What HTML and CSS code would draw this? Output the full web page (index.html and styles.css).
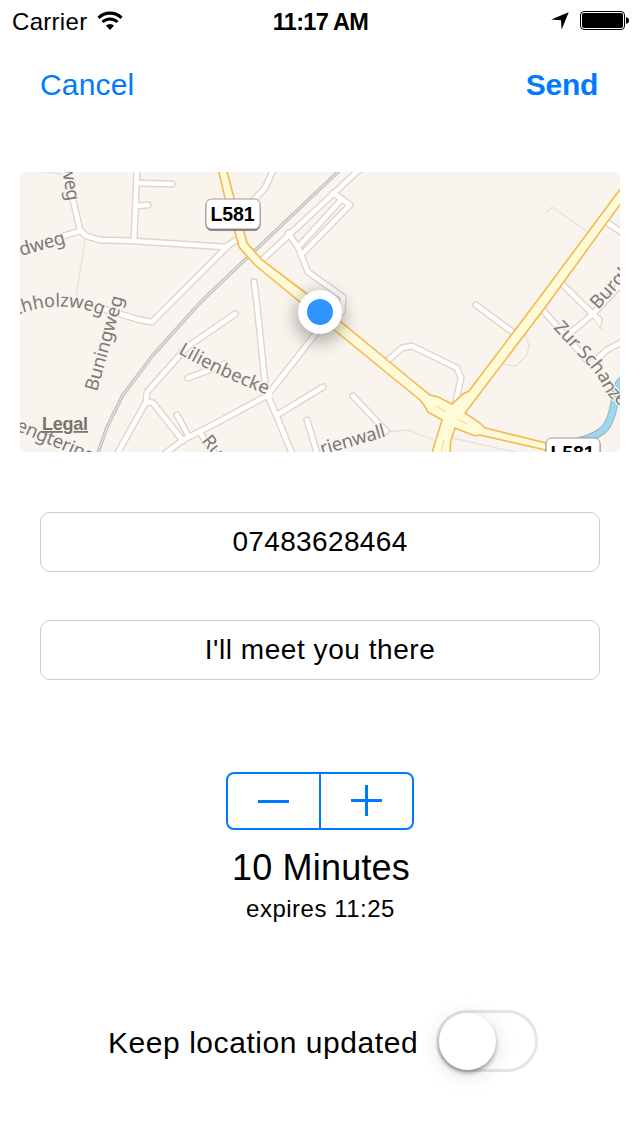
FILE: index.html
```html
<!DOCTYPE html>
<html lang="en">
<head>
<meta charset="utf-8">
<title>Share location</title>
<link rel="stylesheet" href="styles.css">
</head>
<body>
<div class="screen">
  <header class="status-bar">
    <div class="status-left">
      <span class="carrier">Carrier</span>
      <svg class="wifi" width="26" height="20" viewBox="0 0 26 20">
        <path d="M1.5 6.8A16.5 16.5 0 0 1 24.5 6.8" fill="none" stroke="#000" stroke-width="3.1"/>
        <path d="M5.5 11.1A10.6 10.6 0 0 1 20.5 11.1" fill="none" stroke="#000" stroke-width="2.9"/>
        <path d="M8.9 14.6A6 6 0 0 1 17.1 14.6L13 18.9Z"/>
      </svg>
    </div>
    <span class="clock">11:17 AM</span>
    <div class="status-right">
      <svg width="18" height="18" viewBox="0 0 18 18"><path d="M17.7 .2L10.6 17.8L10 8.3L.2 7.6Z"/></svg>
      <svg width="50" height="19" viewBox="0 0 50 19">
        <rect x=".5" y=".5" width="44" height="18" rx="3.5" fill="#fff" stroke="#000"/>
        <rect x="2" y="2" width="41" height="15" rx="2"/>
        <path d="M46 6.2Q49 6.6 49 9.5T46 12.8Z"/>
      </svg>
    </div>
  </header>

  <nav class="nav-bar">
    <a class="cancel">Cancel</a>
    <a class="send">Send</a>
  </nav>

  <svg class="map" width="600" height="280" viewBox="20 172 600 280">
    <defs>
      <g id="streets">
        <path d="M70 185L73 200L80 230L86 236L100 240L133 241L225 247L240 238"/>
        <path d="M80 231L60 237"/>
        <path d="M137 168L134 241M137 183L172 184M136 206L148 205"/>
        <path d="M228 246L152 322L140 320L100 308"/>
        <path d="M235 314L187 347L147 392L146 402L116 456M146 402L153 403L183 441M177 415L189 437"/>
        <path d="M188 378L225 364"/>
        <path d="M163 455L183 440L222 420L268 395M200 433L216 455"/>
        <path d="M254 282L257 305L266 393M320 328L270 392"/>
        <path d="M268 396L277 417L293 456M277 415L323 387M307 420L318 456M353 396L386 431"/>
        <path d="M274 168L265 188L252 202"/>
        <path d="M361 168L262 260M288 233L298 247L308 272L343 297L342 312"/>
        <path d="M333 193L350 205L303 253M342 199L300 245"/>
        <path d="M386 362L402 348L412 346L457 368L461 378L455 405"/>
        <path d="M476 305L514 333M541 308L587 360M560 282L599 320M569 334L593 314L624 281M598 358L607 350L622 342M605 221L624 234"/>
      </g>
      <path id="town-roads" d="M218 168L225 198L234 228L239 247L255 265L300 302L420 400L424 405L428 412L442 420L431 456L450 456L450.5 442L455 428L475 436L480 435L550 451L550 444L485 428L480 423L465 413L547 305L624 199L624 184L534 305L469 391L463 394L452 404L438 397L430 395L420 387L307 294L262 260L247 243L243 228L234 198L226 168Z"/>
      <path id="lbl-holz" d="M15 316Q62 296 112 319"/>
      <path id="lbl-becke" d="M178 353Q215 375 270 396"/>
      <path id="lbl-schanze" d="M553 328L577 354Q595 370 602 385T625 408"/>
      <filter id="pin-shadow" x="-60%" y="-60%" width="220%" height="220%"><feGaussianBlur stdDeviation="9"/></filter>
    </defs>
    <rect x="20" y="172" width="600" height="280" fill="#f9f4ed"/>
    <g class="footpath">
      <path d="M85 240L76 296M38 171L62 174M545 214L552 207L588 232M525 335L529 345L527 355L516 366L502 364M387 432L408 430L434 440M452 438L515 452"/>
    </g>
    <path class="river-edge" d="M624 378Q614 386 614.500 402Q611 424 602 431T576 442"/>
    <path class="river" d="M624 378Q614 386 614.500 402Q611 424 602 431T576 442"/>
    <path class="rail-edge" d="M342 168L210 293L198 305L153 355L123 395L107 427L97 456"/>
    <path class="rail" d="M342 168L210 293L198 305L153 355L123 395L107 427L97 456"/>
    <use href="#streets" class="street-edge"/>
    <path d="M592 316L601 329V317Z" fill="#fff" stroke="#ddd6cc"/>
    <use href="#streets" class="street"/>
    <circle cx="268" cy="395" r="4.500" fill="#fff"/>
    <use href="#town-roads" class="main-road"/>
    <path d="M436 406L446 412M459 420L467 424M440.500 455L444 440" class="lane"/>

    <g class="street-name">
      <text transform="translate(61.500 167) rotate(80)" textLength="35">weg</text>
      <text transform="translate(21 256) rotate(-16)" textLength="47">dweg</text>
      <text><textPath href="#lbl-holz" textLength="90" lengthAdjust="spacingAndGlyphs">chholzweg</textPath></text>
      <text transform="translate(97 392) rotate(-74.500)" textLength="98">Buningweg</text>
      <text><textPath href="#lbl-becke" textLength="98">Lilienbecke</textPath></text>
      <text transform="translate(15 430) rotate(23)" textLength="84">engtering</text>
      <text transform="translate(201 441) rotate(52)">Ruh</text>
      <text transform="translate(322 455) rotate(-16)" textLength="67">rienwall</text>
      <text transform="translate(598 310) rotate(-48)">Burgh</text>
      <text><textPath href="#lbl-schanze" textLength="105">Zur Schanze</textPath></text>
    </g>
    <text class="legal" x="42" y="430" textLength="46">Legal</text>

    <g class="shield">
      <rect class="shield-shadow" x="206" y="200.500" width="54" height="30" rx="5.500"/>
      <rect class="shield-face" x="206" y="199" width="54" height="30" rx="5.500"/>
      <text x="232.500" y="221" textLength="44">L581</text>
      <rect class="shield-shadow" x="546" y="439.500" width="54" height="30" rx="5.500"/>
      <rect class="shield-face" x="546" y="438" width="54" height="30" rx="5.500"/>
      <text x="572.500" y="460" textLength="44">L581</text>
    </g>
    <circle cx="320" cy="317" r="24" fill="#000" opacity=".34" filter="url(#pin-shadow)"/>
    <circle cx="320" cy="312" r="22" fill="#fff"/>
    <circle cx="320" cy="312" r="13" fill="#3094ff"/>
  </svg>

  <main class="form">
    <div class="field phone">07483628464</div>
    <div class="field message">I'll meet you there</div>
    <div class="stepper">
      <button class="step" aria-label="Decrease"><svg width="31" height="31"><path d="M0 16.500H31" stroke="#007aff" stroke-width="3"/></svg></button>
      <button class="step" aria-label="Increase"><svg width="31" height="31"><path d="M0 15.500H31M15.500 0V31" stroke="#007aff" stroke-width="3"/></svg></button>
    </div>
    <div class="duration">10 Minutes</div>
    <div class="expiry">expires 11:25</div>
    <div class="toggle-row">
      <span class="toggle-label">Keep location updated</span>
      <span class="switch"><span class="thumb"></span></span>
    </div>
  </main>
</div>
</body>
</html>
```
FILE: styles.css
```css
* { box-sizing: border-box; }

body {
  margin: 0;
  background: #fff;
  color: #000;
  font-family: "Liberation Sans", Arial, sans-serif;
}

.screen {
  display: flex;
  flex-direction: column;
  width: 640px;
  height: 1136px;
  overflow: hidden;
}

.status-bar {
  display: grid;
  grid-template-columns: 1fr auto 1fr;
  align-items: center;
  height: 41px;
  padding: 0 10px 0 12px;
  font-size: 24px;
  line-height: 38px;
}

.status-left, .status-right { display: flex; align-items: center; }
.status-left { gap: 10px; }
.status-right { justify-content: flex-end; gap: 11px; }
.carrier { letter-spacing: .3px; padding-top: 2px; }
.clock { font-size: 23.500px; font-weight: bold; letter-spacing: -.7px; padding-top: 2px; margin-left: -1px; }

.nav-bar {
  display: flex;
  justify-content: space-between;
  height: 87px;
  padding: 0 42px 0 40px;
  color: #007aff;
  font-size: 30px;
  line-height: 88px;
}

.cancel { letter-spacing: .15px; }
.send { font-weight: bold; letter-spacing: -.3px; }

.map { display: block; margin: 44px 20px 0; flex: none; }
.footpath { fill: none; stroke: #e4e2df; stroke-width: 1.3; }
.river-edge { fill: none; stroke: #9ab4bd; stroke-width: 8; }
.river { fill: none; stroke: #9cd8f1; stroke-width: 6; }
.rail-edge { fill: none; stroke: #bdbdbb; stroke-width: 3.4; }
.rail { fill: none; stroke: #e4e2de; stroke-width: 1.3; }
.street-edge, .street { fill: none; stroke-linecap: round; stroke-linejoin: round; }
.street-edge { stroke: #ddd6cc; stroke-width: 7.4; }
.street { stroke: #fff; stroke-width: 4.6; }
.main-road { fill: #fffbd9; stroke: #f4b950; stroke-width: 1.6; }
.lane { fill: none; stroke: #f8d98d; stroke-width: 1.1; }

.street-name {
  font: 18.500px "Noto Sans", sans-serif;
  fill: #7a7a7a;
  stroke: #f9f4ed;
  stroke-width: 2.5px;
  stroke-linejoin: round;
  paint-order: stroke;
}

.legal {
  font-size: 18px;
  font-weight: bold;
  fill: #77756f;
  text-decoration: underline;
}

.shield { font-size: 19.500px; font-weight: bold; text-anchor: middle; }
.shield-shadow { fill: #777; stroke: #888; }
.shield-face { fill: #fff; stroke: #999; }

.form { display: flex; flex-direction: column; align-items: center; padding: 60px 40px 0; }

.field {
  width: 560px;
  height: 60px;
  border: 1px solid #ccc;
  border-radius: 10px;
  font-size: 28px;
  line-height: 58px;
  text-align: center;
}

.phone { letter-spacing: .35px; }
.message { margin-top: 48px; letter-spacing: .55px; }

.stepper {
  display: flex;
  width: 188px;
  height: 58px;
  margin-top: 92px;
  border: 2px solid #007aff;
  border-radius: 8px;
}

.step {
  display: flex;
  flex: 1;
  align-items: center;
  justify-content: center;
  padding: 0 0 2px;
  border: 0;
  background: none;
}

.step + .step { border-left: 2px solid #007aff; }

.duration { margin: 18px 0 0 2px; font-size: 36px; line-height: 40px; letter-spacing: .2px; }
.expiry { margin: 7px 0 0 1px; font-size: 24px; line-height: 28px; letter-spacing: .5px; }

.toggle-row {
  display: flex;
  align-items: center;
  gap: 18px;
  width: 430px;
  margin: 87px 0 0 6px;
}

.toggle-label { flex: none; width: 310px; padding-top: 4px; font-size: 30px; line-height: 34px; white-space: nowrap; letter-spacing: .55px; }

.switch {
  flex: none;
  width: 102px;
  height: 62px;
  border: 3px solid #e5e5e5;
  border-radius: 31px;
}

.thumb {
  display: block;
  width: 57px;
  height: 57px;
  margin-top: -.5px;
  border-radius: 50%;
  background: #fff;
  box-shadow: 0 3px 4px rgba(0, 0, 0, .32), 0 4px 22px rgba(0, 0, 0, .13);
}
```
